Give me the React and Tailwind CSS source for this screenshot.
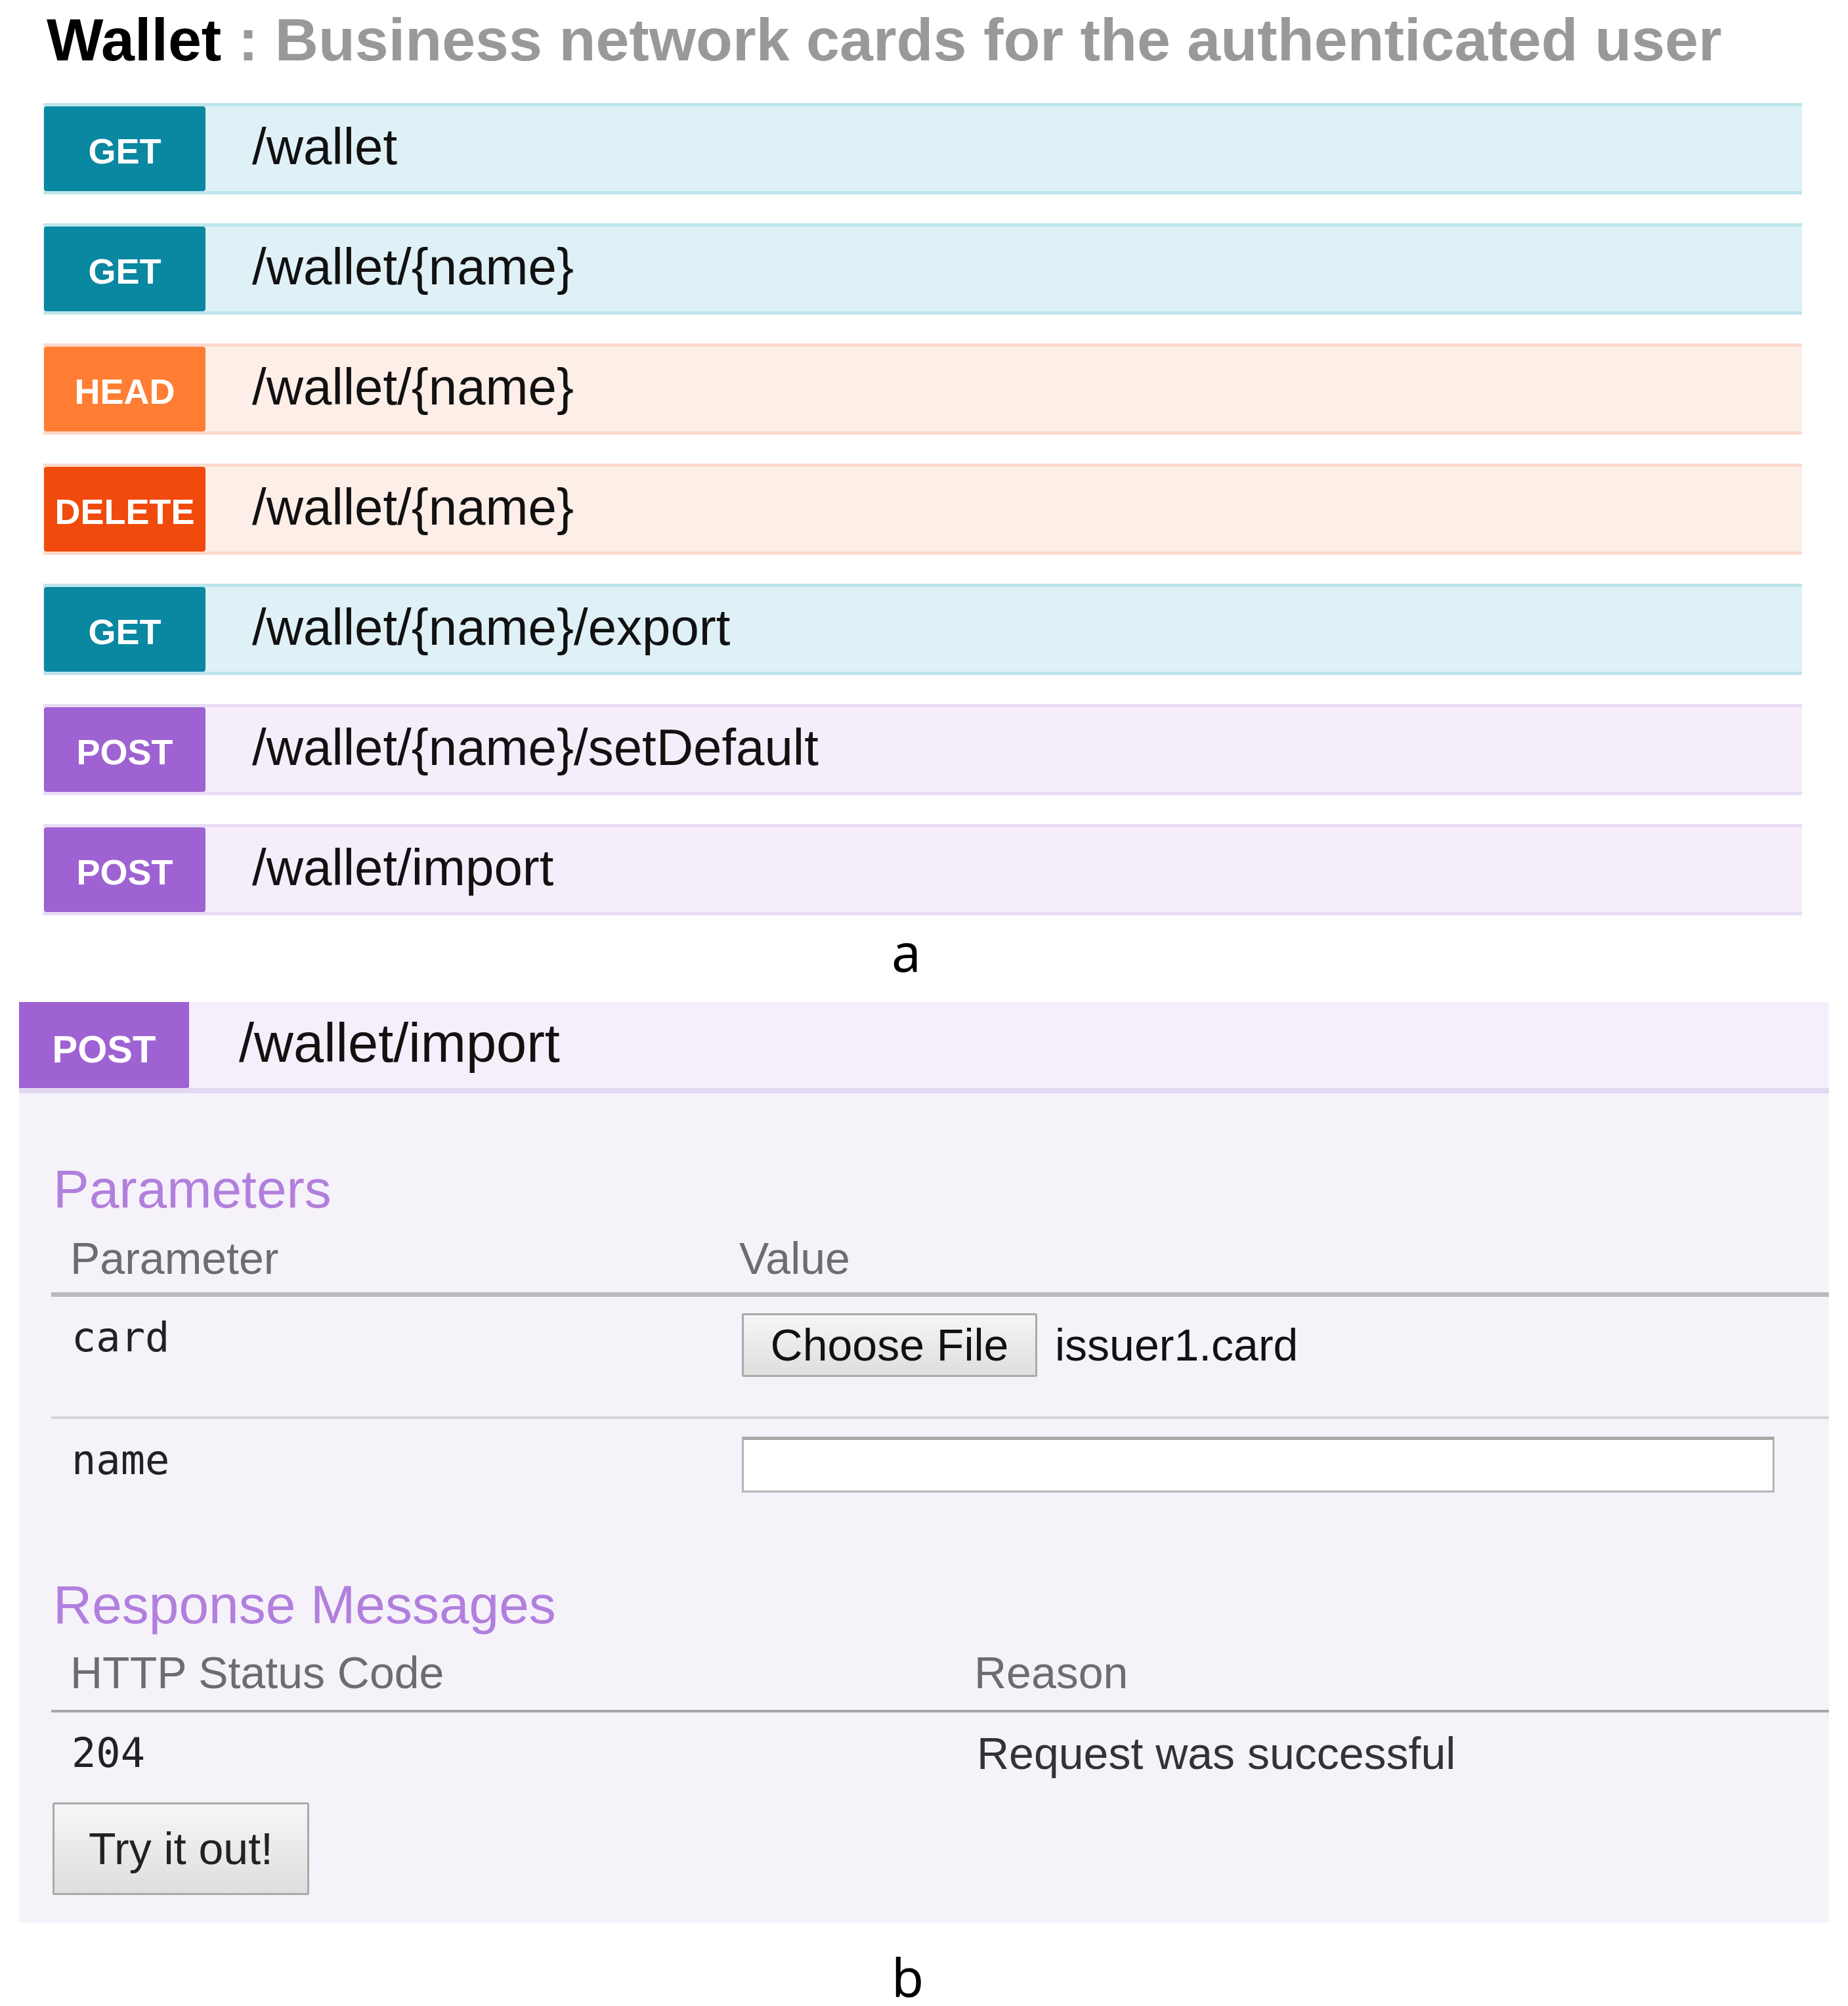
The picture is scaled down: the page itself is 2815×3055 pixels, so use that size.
import React from 'react';

// Operation rows of the wallet endpoint listing
const OPERATIONS = [
  { method: 'GET', path: '/wallet', row: 'bg-[#dff1f6] border-[#bde5eb]', badge: 'bg-[#0a87a1]' },
  { method: 'GET', path: '/wallet/{name}', row: 'bg-[#dff1f6] border-[#bde5eb]', badge: 'bg-[#0a87a1]' },
  { method: 'HEAD', path: '/wallet/{name}', row: 'bg-[#fdeee8] border-[#fcd9cd]', badge: 'bg-[#ff7e34]' },
  { method: 'DELETE', path: '/wallet/{name}', row: 'bg-[#fdeee8] border-[#fcd9cd]', badge: 'bg-[#f04b0c]' },
  { method: 'GET', path: '/wallet/{name}/export', row: 'bg-[#dff1f6] border-[#bde5eb]', badge: 'bg-[#0a87a1]' },
  { method: 'POST', path: '/wallet/{name}/setDefault', row: 'bg-[#f6edfa] border-[#e8ddf5]', badge: 'bg-[#9e62d2]' },
  { method: 'POST', path: '/wallet/import', row: 'bg-[#f6edfa] border-[#e8ddf5]', badge: 'bg-[#9e62d2]' },
];

const sans = "font-['Liberation_Sans',Arial,sans-serif]";
const mono = "font-['DejaVu_Sans_Mono','Liberation_Mono',monospace]";
const label = "font-['Noto_Sans','Open_Sans',sans-serif]";

const OperationRow = ({ op }) => (
  <div className={`flex h-[139px] border-y-[5px] ${op.row}`}>
    <div className={`w-[246px] ml-[1px] rounded-[4px] flex items-center justify-center pt-[8px] text-[54px] font-bold leading-none text-white ${op.badge}`}>
      {op.method}
    </div>
    <div className="flex-1 flex items-center pl-[71px] pb-[6px] text-[78px] leading-none text-[#111]">
      {op.path}
    </div>
  </div>
);

const GrayButton = ({ className, children }) => (
  <button className={`border-[3px] border-[#a9a9a9] rounded-[3px] bg-gradient-to-b from-[#f6f6f6] to-[#dedede] text-[#111] leading-none ${className}`}>
    {children}
  </button>
);

const App = () => {
  return (
    <div className={`w-[2815px] h-[3055px] bg-white overflow-hidden ${sans}`}>
      {/* a: endpoint list */}
      <div className="pl-[66px] pr-[70px]">
        <h1 className="pt-[15px] pl-[5px] text-[91.6px] font-bold leading-none whitespace-nowrap text-black">
          Wallet<span className="text-[#999999]"> : Business network cards for the authenticated user</span>
        </h1>
        <div className="mt-[50px] flex flex-col gap-[44px]">
          {OPERATIONS.map((op, i) => (
            <OperationRow key={i} op={op} />
          ))}
        </div>
      </div>

      <p className={`mt-[15px] pr-[54px] text-center text-[80px] leading-none text-black ${label}`}>a</p>

      {/* b: expanded POST /wallet/import */}
      <div className="mt-[37px] mx-[29px]">
        <div className="flex h-[139px] border-b-[8px] border-[#e4d7f2] bg-[#f6eefa]">
          <div className="w-[259px] flex items-center justify-center pt-[14px] rounded-br-[3px] bg-[#9e62d2] text-[58px] font-bold leading-none text-white">
            POST
          </div>
          <div className="flex-1 flex items-center pl-[76px] pb-[6px] text-[83px] leading-none text-[#111]">
            /wallet/import
          </div>
        </div>

        <div className="bg-[#f6f2fa] pl-[52px] pt-[105px] pb-[42px]">
          <h3 className="text-[82px] leading-none text-[#b17fdd]">Parameters</h3>

          <div className="mt-[30px] -ml-[3px]">
            <div className="flex border-b-[7px] border-[#bdb9c1] pb-[18px] text-[68px] leading-none text-[#6d6d6d]">
              <div className="w-[1048px] pl-[29px]">Parameter</div>
              <div>Value</div>
            </div>

            <div className="flex h-[186px] border-b-[4px] border-[#d6d2da]">
              <div className={`w-[1050px] pl-[31px] pt-[31px] text-[62px] leading-none text-[#222] ${mono}`}>card</div>
              <div className="pt-[25px] flex items-start">
                <GrayButton className="ml-[2px] w-[450px] h-[97px] text-[68px]">Choose File</GrayButton>
                <span className="ml-[27px] mt-[14px] text-[68px] leading-none text-[#111]">issuer1.card</span>
              </div>
            </div>

            <div className="flex">
              <div className={`w-[1050px] pl-[31px] pt-[32px] text-[62px] leading-none text-[#222] ${mono}`}>name</div>
              <div className="pt-[27px]">
                <input
                  type="text"
                  className="ml-[2px] block w-[1573px] h-[85px] bg-white border-[3px] border-t-[5px] border-[#b4b4b4] border-t-[#a8a8a8] outline-none"
                />
              </div>
            </div>
          </div>

          <h3 className="mt-[130px] text-[82px] leading-none text-[#b17fdd]">Response Messages</h3>

          <div className="mt-[28px] -ml-[3px]">
            <div className="flex border-b-[4px] border-[#a7a4aa] pb-[23px] text-[68px] leading-none text-[#6d6d6d]">
              <div className="w-[1406px] pl-[29px]">HTTP Status Code</div>
              <div>Reason</div>
            </div>
            <div className="flex items-start">
              <div className={`w-[1406px] pl-[31px] pt-[31px] text-[62px] leading-none text-[#222] ${mono}`}>204</div>
              <div className="pt-[28px] pl-[4px] text-[68px] leading-none text-[#333]">Request was successful</div>
            </div>
          </div>

          <GrayButton className="mt-[41px] -ml-[1px] w-[391px] h-[141px] text-[68px] text-[#222]">Try it out!</GrayButton>
        </div>
      </div>

      <p className={`mt-[50px] pr-[50px] text-center text-[80px] leading-[64px] text-black ${label}`}>b</p>
    </div>
  );
};

export default App;
